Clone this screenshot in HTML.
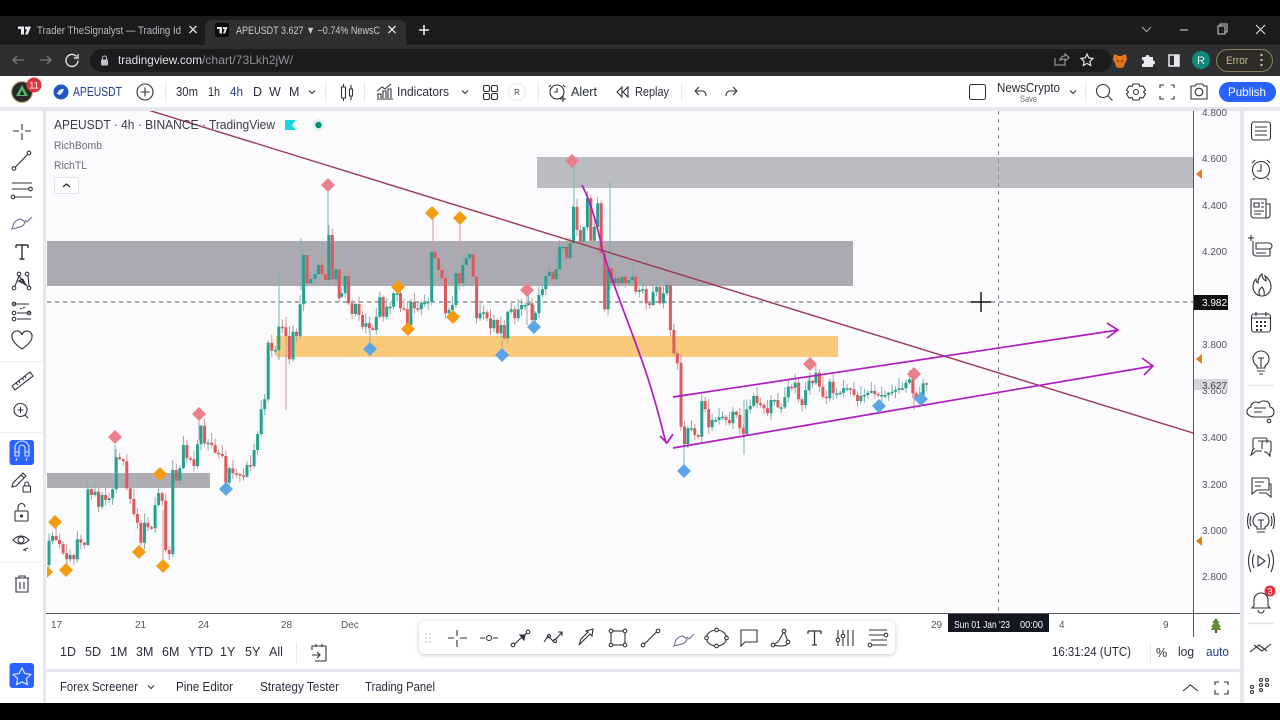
<!DOCTYPE html>
<html><head><meta charset="utf-8"><title>APEUSDT</title>
<style>
html,body{margin:0;padding:0;background:#000;width:1280px;height:720px;overflow:hidden}
svg{display:block;font-family:"Liberation Sans",sans-serif;filter:blur(.3px)}
.t{fill:#2a2e39;font-size:12.5px}
.ax{fill:#50535e;font-size:10px}
.i{fill:none;stroke:#2f323c;stroke-width:1.1}
.c{fill:none;stroke:#dfe1e4;stroke-width:1.3}
</style></head><body>
<svg id="s" xmlns="http://www.w3.org/2000/svg" width="1280" height="720" viewBox="0 0 1280 720">
<defs>
<clipPath id="cp"><rect x="47" y="111" width="1146" height="502"/></clipPath>
<filter id="sh" x="-5%" y="-30%" width="110%" height="170%"><feDropShadow dx="0" dy="1" stdDeviation="2.5" flood-color="#000" flood-opacity=".22"/></filter>
</defs>
<!-- browser chrome -->
<rect width="1280" height="720" fill="#000"/>
<rect y="16" width="1280" height="30" fill="#1b1c1e"/>
<rect y="45" width="1280" height="31" fill="#2e2f31"/>
<path d="M205 46V27q0-7 7-7h187q7 0 7 7v19z" fill="#2e2f31"/>
<rect x="90" y="49" width="1022" height="23" rx="11.500" fill="#1b1c1e"/>
<!-- tab 1 -->
<path d="M18 26.500h6v8h-3v-5.500h-3z" fill="#e8eaed"/><circle cx="26.500" cy="28" r="1.500" fill="#e8eaed"/><path d="M25 34.500l3.200-8H31l-3.200 8z" fill="#e8eaed"/>
<text x="37" y="34" font-size="11" fill="#b9bbbe" textLength="144" lengthAdjust="spacingAndGlyphs">Trader TheSignalyst — Trading Id</text>
<path d="M189.500 26l7 7m0-7l-7 7" class="c"/>
<!-- tab 2 -->
<rect x="215" y="23" width="14" height="14" rx="2" fill="#0a0a0a"/>
<path d="M217 27h5v6.500h-2.500v-4.500H217z" fill="#e8eaed"/><circle cx="224" cy="28.200" r="1.200" fill="#e8eaed"/><path d="M223 33.500l2.500-6.500h2l-2.500 6.500z" fill="#e8eaed"/>
<text x="236" y="34" font-size="11" fill="#c7c9cc" textLength="144" lengthAdjust="spacingAndGlyphs">APEUSDT 3.627 ▼ −0.74% NewsC</text>
<path d="M388.500 26l7 7m0-7l-7 7" class="c"/>
<path d="M424 25v10M419 30h10" stroke="#e8eaed" stroke-width="1.600" fill="none"/>
<path d="M1142 27l4.500 4.500 4.500-4.500" fill="none" stroke="#aaa" stroke-width="1"/>
<path d="M1180 30h8" stroke="#bbb" stroke-width="1.200"/>
<path d="M1218 26h7v8h-7zM1220 26v-2h7v8h-2" fill="none" stroke="#ccc" stroke-width="1"/>
<path d="M1256 25l9 9m0-9l-9 9" stroke="#ddd" stroke-width="1.100"/>
<path d="M24 60H13m4-4l-4 4 4 4" fill="none" stroke="#77797c" stroke-width="1.300"/>
<path d="M40 60h11m-4-4l4 4-4 4" fill="none" stroke="#77797c" stroke-width="1.300"/>
<path d="M76.500 56.500a6 6 0 1 0 1.500 4M78 54v4h-4" fill="none" stroke="#dfe1e4" stroke-width="1.400"/>
<rect x="101" y="59.500" width="7" height="6" rx="1" fill="#bdbfc2"/><path d="M102.500 60v-2a2 2 0 0 1 4 0v2" fill="none" stroke="#bdbfc2"/>
<text x="118" y="64" font-size="12" fill="#dfe1e4" textLength="84" lengthAdjust="spacingAndGlyphs">tradingview.com</text>
<text x="202" y="64" font-size="12" fill="#8d8f92" textLength="91" lengthAdjust="spacingAndGlyphs">/chart/73Lkh2jW/</text>
<path d="M1055 58v7h10v-3M1060 60q1-4 5-4v-2l4 3.500-4 3.500v-2q-3 0-5 1z" fill="none" stroke="#aaa" stroke-width="1"/>
<path d="M1087 54l1.800 3.900 4.200.500-3.100 2.900.8 4.200-3.700-2.100-3.700 2.100.8-4.200-3.100-2.900 4.200-.5z" fill="none" stroke="#dfe1e4" stroke-width="1.200"/>
<path d="M1114 54l5 2h2l5-2 1 6-2 3-1 4-3 1h-2l-3-1-1-4-2-3z" fill="#e2761b"/><path d="M1117 60l2 2M1123 60l-2 2" stroke="#5b3a1e" stroke-width="1.200"/>
<path d="M1142 57h3.500a2 2 0 0 1 4 0h3.500v3.500a2 2 0 0 1 0 4V67h-11v-3a2 2 0 0 0 0-4z" fill="#e8eaed"/>
<rect x="1169" y="55" width="10" height="11" fill="none" stroke="#e8eaed" stroke-width="1.500"/><rect x="1174" y="55" width="5" height="11" fill="#e8eaed"/>
<circle cx="1201" cy="60" r="9" fill="#0f8a78"/><text x="1201" y="64" font-size="11" fill="#e8eaed" text-anchor="middle">R</text>
<rect x="1216.500" y="49.500" width="56" height="22" rx="11" fill="#2e2c26" stroke="#8b7f5e"/>
<text x="1226" y="64" font-size="11" fill="#c8b98f" textLength="22" lengthAdjust="spacingAndGlyphs">Error</text>
<path d="M1261.500 54v2M1261.500 59v2M1261.500 64v2" stroke="#d4c79a" stroke-width="2"/>

<!-- page background -->
<rect y="76" width="1280" height="627" fill="#e6e7ee"/>
<rect y="76" width="1280" height="31" fill="#fff"/>
<rect x="0" y="111" width="43" height="592" fill="#fff"/>
<rect x="1244" y="111" width="36" height="592" fill="#fff"/>
<rect x="46" y="111" width="1194" height="558" fill="#fbfbfe" rx="2"/>
<rect x="46" y="613" width="1194" height="56" fill="#fff"/>
<rect x="46" y="672" width="1194" height="31" fill="#fff" rx="2"/>
<rect x="1193" y="111" width="47" height="502" fill="#fcfcfe"/>

<!-- zones -->
<g clip-path="url(#cp)">
<rect x="47" y="241" width="806" height="45" fill="#abaab2"/>
<rect x="537" y="157" width="656" height="31" fill="#bbbbc2"/>
<rect x="47" y="473" width="163" height="15" fill="#aeadb4"/>
<rect x="276" y="336" width="562" height="21" fill="#f9ca7a"/>
<path d="M47 302H1193" stroke="#55585f" stroke-width="1" stroke-dasharray="4 4"/>
<path d="M998.500 111V613" stroke="#8a8c92" stroke-width="1" stroke-dasharray="4 4"/>
<g id="candles"></g>
<path d="M148 110L1193 433" stroke="#9c3a50" stroke-width="1.400" fill="none"/>
<path d="M582 185C592 205 597 225 602 248C612 285 640 350 650 385C658 410 662 428 666 443M660 436l7 7 6-9" stroke="#b01cc0" stroke-width="1.700" fill="none"/>
<path d="M673 397L1118 330M1107 323l11 7-11 8" stroke="#b01cc0" stroke-width="1.700" fill="none"/>
<path d="M673 448L1153 366M1142 358l11 8-9 9" stroke="#b01cc0" stroke-width="1.700" fill="none"/>
<g fill="#e9808a">
<path d="M572 154l7 7-7 7-7-7z"/><path d="M328 178l7 7-7 7-7-7z"/><path d="M199 407l7 7-7 7-7-7z"/><path d="M115 430l7 7-7 7-7-7z"/><path d="M527 283l7 7-7 7-7-7z"/><path d="M810 357l7 7-7 7-7-7z"/><path d="M914 367l7 7-7 7-7-7z"/>
</g>
<g fill="#f39c12">
<path d="M432 206l7 7-7 7-7-7z"/><path d="M460 211l7 7-7 7-7-7z"/><path d="M398 280l7 7-7 7-7-7z"/><path d="M408 322l7 7-7 7-7-7z"/><path d="M453 310l7 7-7 7-7-7z"/><path d="M160 467l7 7-7 7-7-7z"/><path d="M139 545l7 7-7 7-7-7z"/><path d="M55 515l7 7-7 7-7-7z"/><path d="M66 563l7 7-7 7-7-7z"/><path d="M163 559l7 7-7 7-7-7z"/><path d="M46 565l7 7-7 7-7-7z"/>
</g>
<g fill="#5aa5e6">
<path d="M370 342l7 7-7 7-7-7z"/><path d="M502 348l7 7-7 7-7-7z"/><path d="M534 320l7 7-7 7-7-7z"/><path d="M226 482l7 7-7 7-7-7z"/><path d="M684 464l7 7-7 7-7-7z"/><path d="M879 399l7 7-7 7-7-7z"/><path d="M921 392l7 7-7 7-7-7z"/>
</g>
<path d="M981 292v20M971 302h20" stroke="#111" stroke-width="1.400"/>
</g>

<!-- axes -->
<path d="M46 613.500H1240" stroke="#55585f"/>
<path d="M1193.500 111V637" stroke="#55585f"/>
<g class="ax">
<text x="1202" y="116">4.800</text><text x="1202" y="162">4.600</text><text x="1202" y="209">4.400</text><text x="1202" y="255">4.200</text><text x="1202" y="348">3.800</text><text x="1202" y="394">3.600</text><text x="1202" y="441">3.400</text><text x="1202" y="488">3.200</text><text x="1202" y="534">3.000</text><text x="1202" y="580">2.800</text>
</g>
<rect x="1194" y="295" width="34" height="15" fill="#111"/><text x="1202" y="306" font-size="10" fill="#fff">3.982</text>
<rect x="1194" y="379" width="34" height="11" fill="#d5d6dc"/><text x="1202" y="389" font-size="10" fill="#444">3.627</text>
<g fill="#e67e10"><path d="M1202 169v10l-6-5z"/><path d="M1202 354v10l-6-5z"/><path d="M1202 536v10l-6-5z"/></g>
<g class="ax"><text x="51" y="628">17</text><text x="135" y="628">21</text><text x="198" y="628">24</text><text x="281" y="628">28</text><text x="341" y="628">Dec</text><text x="931" y="628">29</text><text x="1059" y="628">4</text><text x="1163" y="628">9</text></g>
<rect x="948" y="614" width="101" height="18" fill="#131722"/>
<text x="954" y="628" font-size="10" fill="#fff" textLength="56" lengthAdjust="spacingAndGlyphs">Sun 01 Jan '23</text>
<text x="1020" y="628" font-size="10" fill="#fff" textLength="23" lengthAdjust="spacingAndGlyphs">00:00</text>
<path d="M1216 618l3.500 5h-1.500l3 4h-2l2.500 3h-11l2.500-3h-2l3-4H1212z" fill="#5d8a35"/><rect x="1215" y="630" width="2" height="3" fill="#6b4a2a"/>

<!-- legend -->
<text x="54" y="129" font-size="12.500" fill="#3a3d47" textLength="221" lengthAdjust="spacingAndGlyphs">APEUSDT · 4h · BINANCE · TradingView</text>
<path d="M285 120h11l-4 5 4 5h-11z" fill="#19d6e6"/>
<circle cx="318.500" cy="125" r="6" fill="#dff1ee"/><circle cx="318.500" cy="125" r="3.200" fill="#0e8f7c"/>
<text x="54" y="149" font-size="11" fill="#6a6d78" textLength="48" lengthAdjust="spacingAndGlyphs">RichBomb</text>
<text x="54" y="169" font-size="11" fill="#6a6d78" textLength="33" lengthAdjust="spacingAndGlyphs">RichTL</text>
<rect x="54.500" y="177.500" width="24" height="16" rx="2" fill="#fff" stroke="#e0e3eb"/><path d="M63 187l3.500-3 3.500 3" fill="none" stroke="#222" stroke-width="1.200"/>

<!-- top toolbar -->
<circle cx="22" cy="92" r="10.500" fill="#2a2a2a" stroke="#c9b68d" stroke-width="1.200"/><path d="M22 85l6 11H16z" fill="#58b868"/><path d="M22 90l2.500 5h-5z" fill="#222"/>
<circle cx="34" cy="85" r="7.500" fill="#e0323c"/><text x="34" y="88.500" font-size="9.500" fill="#fff" text-anchor="middle">11</text>
<circle cx="61" cy="92" r="7.500" fill="#1f55c4"/><path d="M57 94q2-6 7-5-1 2-1 3l-3 3z" fill="#dfe8ff"/>
<text x="73" y="96" font-size="12.500" fill="#24408f" textLength="49" lengthAdjust="spacingAndGlyphs">APEUSDT</text>
<circle cx="145" cy="92" r="8" class="i"/><path d="M145 87.500v9M140.500 92h9" class="i"/>
<path d="M165.500 82v20M325.500 82v20M364.500 82v20M538.500 82v20M681.500 82v20M1085.500 82v20" stroke="#e8e9ee"/>
<g class="t"><text x="176" y="96" textLength="22" lengthAdjust="spacingAndGlyphs">30m</text><text x="208" y="96" textLength="12" lengthAdjust="spacingAndGlyphs">1h</text><text x="230" y="96" style="fill:#24408f" textLength="13" lengthAdjust="spacingAndGlyphs">4h</text><text x="253" y="96">D</text><text x="269" y="96">W</text><text x="289" y="96">M</text></g>
<path d="M309 90.500l3 3 3-3M462 90.500l3 3 3-3M1070 90.500l3 3 3-3" class="i"/>
<path d="M341.500 87h4v11h-4zM343.500 84v3M343.500 98v3M349.500 89h3v7h-3zM351 85v4M351 96v4" class="i"/>
<path d="M377 99h16M378 98v-4h3v4M383 98v-7h3v7M388 98v-9h3v9M377 91l5-4 3 2 6-5" class="i"/>
<text x="397" y="96" class="t" textLength="52" lengthAdjust="spacingAndGlyphs">Indicators</text>
<rect x="483.500" y="85.500" width="6" height="6" rx="1.500" class="i"/><rect x="491.500" y="85.500" width="6" height="6" rx="1.500" class="i"/><rect x="483.500" y="93.500" width="6" height="6" rx="1.500" class="i"/><rect x="491.500" y="93.500" width="6" height="6" rx="1.500" class="i"/>
<circle cx="517" cy="92" r="8.500" fill="#fff" stroke="#e8e9ee"/><text x="517" y="95" font-size="8" fill="#444" text-anchor="middle">R</text>
<circle cx="557" cy="92" r="7" class="i"/><path d="M557 88v4h-3M551 85l-2 2M563 85l2 2M560 99h6M563 96v6" class="i"/>
<text x="571" y="96" class="t" textLength="26" lengthAdjust="spacingAndGlyphs">Alert</text>
<path d="M622 87l-5 5 5 5zM628 87l-5 5 5 5z" class="i"/>
<text x="635" y="96" class="t" textLength="34" lengthAdjust="spacingAndGlyphs">Replay</text>
<path d="M695 91l4-4M695 91l4 4M695 91h8q3 1 3 5" class="i"/>
<path d="M737 91l-4-4M737 91l-4 4M737 91h-8q-3 1-3 5" class="i"/>
<rect x="969.500" y="84.500" width="16" height="15" rx="2" class="i"/>
<text x="997" y="92" class="t" textLength="63" lengthAdjust="spacingAndGlyphs">NewsCrypto</text>
<text x="1020" y="102" font-size="9" fill="#6a6d78" textLength="17" lengthAdjust="spacingAndGlyphs">Save</text>
<circle cx="1103" cy="91" r="6.500" class="i"/><path d="M1108 96l4.500 4.500" class="i"/>
<circle cx="1136" cy="92" r="2.500" class="i"/><path d="M1133 84h6l1 2.500 3-.5 2.500 4-2 2 2 2-2.500 4-3-.5-1 2.500h-6l-1-2.500-3 .5-2.500-4 2-2-2-2 2.500-4 3 .5z" class="i"/>
<path d="M1160 88v-3h4M1171 85h3v3M1174 96v3h-3M1164 99h-4v-3" class="i"/>
<path d="M1191 86h4l1.500-2h6l1.500 2h3v13h-16z" class="i"/><circle cx="1199" cy="92" r="3.800" class="i"/>
<rect x="1219" y="82" width="57" height="20" rx="10" fill="#2962ff"/>
<text x="1228" y="96" font-size="12" fill="#fff" textLength="38" lengthAdjust="spacingAndGlyphs">Publish</text>

<!-- left toolbar -->
<g class="i">
<path d="M22 124v6M22 133v7M13 131h6M25 131h6"/>
<circle cx="14" cy="168.500" r="1.800"/><circle cx="29" cy="153" r="1.800"/><path d="M15.500 167l12-12.500"/>
<path d="M12 183h20M12 189h17M15 197h17"/><circle cx="30.500" cy="189" r="1.800"/><circle cx="13" cy="197" r="1.800"/>
<path d="M12 229l2-6q3-4 7-4l4 3q-1 4-5 5z" stroke="#6a7090"/><path d="M25 220l2 2 5-5" stroke="#6a7090"/>
<path d="M16 245h12M16 245v3M28 245v3M22 245v14M19.500 259h5" stroke-width="1.400"/>
<circle cx="14" cy="288" r="1.800"/><circle cx="29" cy="288" r="1.800"/><circle cx="19" cy="274" r="1.800"/><circle cx="27" cy="274" r="1.800"/><circle cx="22" cy="281" r="1.800"/><path d="M15 286l4-10 8 10-8-6M28 276l1 10M17 281l8 1"/>
<path d="M13 304h16M17 313h14M17 319h14"/><circle cx="14" cy="304" r="1.800"/><circle cx="14" cy="313" r="1.800"/><circle cx="14" cy="319" r="1.800"/><circle cx="29" cy="313" r="1.800"/><path d="M20 309l6-2" stroke-dasharray="2 1"/>
<path d="M22 349q-10-7-10-12a5 5 0 0 1 10-2 5 5 0 0 1 10 2q0 5-10 12z"/>
<path d="M12 386l18-14 3 4-18 14zM16 383l2 2M19 381l1 2M22 378l2 2M25 376l1 2"/>
<circle cx="20.500" cy="410" r="6.500"/><path d="M20.500 407v6M17.500 410h6M25 415l3 3"/>
<path d="M13 483l10-10 3 3-10 10-4 1zM21 475l3 3"/><rect x="23" y="486" width="7.500" height="6" rx="1"/><path d="M24.800 486v-2a2 2 0 0 1 4 0v2"/>
<rect x="15" y="511" width="13" height="10" rx="1"/><path d="M18 511v-4a3.500 3.500 0 0 1 7 0"/><circle cx="21.500" cy="516" r="1" fill="#2f323c"/>
<path d="M13 540q8-8 16 0-8 8-16 0z"/><circle cx="21" cy="540" r="3"/><path d="M23 550l5-2M24 549l2 2"/>
<path d="M15 578h14M19 578v-2h6v2M16 578v14h12v-14M20 582v7M24 582v7"/>
</g>
<path d="M0 361.500h43M0 432.500h43M0 562.500h43" stroke="#eceef2"/>
<rect x="9.500" y="440" width="24.500" height="25" rx="3" fill="#2962ff"/>
<path d="M15 456v-8a7 7 0 0 1 14 0v8h-4v-8a3 3 0 0 0-6 0v8zM15 452h4M25 452h4M17 458l-1 3M27 458l-1 3" fill="none" stroke="#dfe8ff" stroke-width="1.100"/>
<rect x="9.500" y="663" width="24.500" height="25" rx="3" fill="#2962ff"/>
<path d="M22 668l2.800 5.500 6 .9-4.400 4.200 1 6-5.400-2.800-5.400 2.800 1-6-4.400-4.200 6-.9z" fill="none" stroke="#dfe8ff" stroke-width="1.200"/>

<!-- right toolbar -->
<g class="i">
<rect x="1251.500" y="122" width="19" height="18" rx="2.500"/><path d="M1255 127h12M1255 131h12M1255 135h12"/>
<circle cx="1261" cy="170" r="8.500"/><path d="M1261 164v7h-4M1252 163l3-3M1270 163l-3-3M1255 178l-2 2M1267 178l2 2"/>
<path d="M1251 199h15v19h-12a3 3 0 0 1-3-3zM1266 204h4v11a3 3 0 0 1-3 3h-1M1254 203h5v4h-5zM1261 203h3M1261 207h3M1254 211h10M1254 214h7"/>
<path d="M1253 241v12a3 3 0 0 0 3 3h13a1 1 0 0 0 1-1v-7M1256 243h13a1.500 1.500 0 0 1 0 6h-13zM1256 253h10M1248 238h6M1251 235v6"/>
<path d="M1262 274q0 5 4 7 0-3-1-5 6 4 6 11a9 9 0 0 1-18 0q0-5 3-8 0 3 2 4 0-6 4-9zM1260 295q-3-4 2-8 3 4 2 8"/>
<rect x="1251.500" y="314" width="19" height="18" rx="2.500"/><path d="M1256 312v4M1266 312v4M1251.500 318h19"/>
<path d="M1256 322h2M1260 322h2M1264 322h2M1256 326h2M1260 326h2M1264 326h2M1256 330h2M1260 330h2" stroke-width="2"/>
<path d="M1257 368v-2q-4-3-4-7a8 8 0 0 1 16 0q0 4-4 7v2zM1257 371h8M1259 374h4M1258 358h6M1261 358v9"/>
<path d="M1254 417h14q6 0 6-5 0-4-4-5 0-6-6-6-4 0-5 2-3-2-6 0t-2 4q-4 1-4 5t7 5zM1254 408h12M1254 412h8"/><circle cx="1269" cy="421" r="1.800"/>
<path d="M1267 443v-3q0-2-2-2h-10q-2 0-2 2v7q0 2 2 2h0M1262 449v-6q0-2 2-2h5q2 0 2 2v7q0 2-1 2v4l-4-4h-2M1253 449l-2 6 5-4h6M1258 441h5"/>
<path d="M1252 478h15q2 0 2 2v10h-12l-5 4zM1255 482h9M1255 486h6M1269 484h2v13l-5-4h-7"/>
<path d="M1257 529v-2q-4-2-4-6a8 8 0 0 1 16 0q0 4-4 6v2zM1257 532h8M1258 520h6M1261 520v8M1251 516q-2 5 0 10M1249 513q-3 8 0 16M1271 516q2 5 0 10M1273 513q3 8 0 16"/>
<path d="M1258 556l7 5-7 5zM1254 554q-3 7 0 14M1268 554q3 7 0 14M1251 550q-5 11 0 22M1271 550q5 11 0 22"/>
<path d="M1254 606v-6a7 7 0 0 1 14 0v6l2 2h-18zM1258 610a3 3 0 0 0 6 0"/>
<path d="M1250 652l9-7 8 6M1254 645l8 6 9-7"/>
<circle cx="1252" cy="687" r="1.500"/><circle cx="1252" cy="692" r="1.500"/><circle cx="1261" cy="680" r="1.500"/><circle cx="1261" cy="685" r="1.500"/><circle cx="1261" cy="690" r="1.500"/><circle cx="1267" cy="680" r="1.500"/><circle cx="1267" cy="685" r="1.500"/>
</g>
<circle cx="1270" cy="591" r="5.500" fill="#e0323c"/><text x="1270" y="594.500" font-size="9" fill="#fff" text-anchor="middle">3</text>
<path d="M1248 385.500h26M1248 623.500h26" stroke="#e6e7ee" stroke-width="1.500"/>

<!-- bottom range bar -->
<g class="t" font-size="12">
<text x="60" y="656">1D</text><text x="85" y="656">5D</text><text x="110" y="656">1M</text><text x="136" y="656">3M</text><text x="162" y="656">6M</text><text x="188" y="656">YTD</text><text x="220" y="656">1Y</text><text x="245" y="656">5Y</text><text x="269" y="656">All</text>
</g>
<path d="M296.500 642v22M1150.500 642v22" stroke="#e8e9ee"/>
<path d="M312 650v-4h13q1 0 1 1v13q0 1-1 1h-10M312 655h8m-3-3l3 3-3 3M316 644v3M322 644v3" class="i"/>
<text x="1052" y="656" class="t" textLength="79" lengthAdjust="spacingAndGlyphs">16:31:24 (UTC)</text>
<text x="1156" y="657" class="t">%</text>
<text x="1178" y="656" class="t" textLength="16" lengthAdjust="spacingAndGlyphs">log</text>
<text x="1206" y="656" class="t" style="fill:#24408f" textLength="23" lengthAdjust="spacingAndGlyphs">auto</text>

<!-- drawing toolbar -->
<rect x="419" y="621" width="476" height="33" rx="6" fill="#fff" filter="url(#sh)"/>
<g fill="#cfd1d6"><circle cx="426" cy="634" r="1"/><circle cx="430" cy="634" r="1"/><circle cx="426" cy="638" r="1"/><circle cx="430" cy="638" r="1"/><circle cx="426" cy="642" r="1"/><circle cx="430" cy="642" r="1"/></g>
<g class="i">
<path d="M457 630v6M457 640v7M448 638h6M460 638h7"/>
<path d="M480 638h5M493 638h5"/><circle cx="489" cy="638" r="2.500"/>
<circle cx="513" cy="645" r="1.800"/><circle cx="528" cy="632" r="1.800"/><path d="M514.500 644l12-11"/><path d="M520 635l5 0-1 5z" fill="#2f323c"/>
<path d="M544 642l4-6 5 5 4-3 5-6M558 632h4v4"/><circle cx="549" cy="636" r="1.600"/><circle cx="555" cy="641" r="1.600"/>
<path d="M579 645l2-6 7-7-2-1 7-2-1 7-2-2-7 7z"/>
<rect x="611" y="631" width="14" height="14"/><circle cx="611" cy="631" r="1.800" fill="#fff"/><circle cx="625" cy="631" r="1.800" fill="#fff"/><circle cx="611" cy="645" r="1.800" fill="#fff"/><circle cx="625" cy="645" r="1.800" fill="#fff"/>
<circle cx="643" cy="645" r="1.800"/><circle cx="658" cy="631" r="1.800"/><path d="M644.500 644l12-12"/>
<path d="M674 646l2-6q3-4 7-4l4 3q-1 4-5 5z" stroke="#6a7090"/><path d="M687 637l2 2 5-5" stroke="#6a7090"/>
<ellipse cx="716.500" cy="638" rx="10" ry="8"/><circle cx="716.500" cy="630" r="1.800" fill="#fff"/><circle cx="716.500" cy="646" r="1.800" fill="#fff"/><circle cx="706.500" cy="638" r="1.800" fill="#fff"/><circle cx="726.500" cy="638" r="1.800" fill="#fff"/>
<path d="M741 630h16v12h-12l-4 4z"/>
<path d="M773 645q5-2 8-8l3-6 4 11q0 4-7 4-5 0-8-1z"/><circle cx="773" cy="645" r="1.800" fill="#fff"/><circle cx="784" cy="631" r="1.800" fill="#fff"/><circle cx="788" cy="642" r="1.800" fill="#fff"/>
<path d="M808 631h13M808 631v3M821 631v3M814.500 631v14M812 645h5" stroke-width="1.300"/>
<path d="M838 630v16M843 630v16M848 630v16M853 630v16"/><circle cx="838" cy="640" r="1.800" fill="#fff"/><circle cx="843" cy="636" r="1.800" fill="#fff"/>
<path d="M869 630h18M869 635h15M872 645h15M871 640h16"/><circle cx="886" cy="635" r="1.800" fill="#fff"/><circle cx="870" cy="645" r="1.800" fill="#fff"/>
</g>

<!-- bottom panel -->
<g class="t" font-size="12">
<text x="60" y="691" textLength="78" lengthAdjust="spacingAndGlyphs">Forex Screener</text>
<text x="176" y="691" textLength="57" lengthAdjust="spacingAndGlyphs">Pine Editor</text>
<text x="260" y="691" textLength="79" lengthAdjust="spacingAndGlyphs">Strategy Tester</text>
<text x="365" y="691" textLength="70" lengthAdjust="spacingAndGlyphs">Trading Panel</text>
</g>
<path d="M148 685.500l3 3 3-3" class="i"/>
<path d="M1183 691l7.500-6 7.500 6" class="i"/>
<path d="M1215 685v-3h4M1224 682h4v3M1228 690v4h-4M1219 694h-4v-4" class="i"/>
<rect y="703" width="1280" height="17" fill="#000"/>
</svg>
<script>
(function(){
var segs=[
[49,3.536,200,1095,[1022,1008,1020,1032,1060,1078,1065,1078,1018,1028,1035,868,885,875,920,885,900,895,868,772,778,784,865,897,942,968,1028,968,982,985,915,880,902,1050,1062,810,842,805,735,775,778,798,733,677,730,728,735,758,762,768,848,805,820,822,826,830,795,798,750,702,628,598,428,452,450,380,382,408,478,395,408,313,165,250,237]],
[315,3.46,200,237,[222,195,222,240,105,238,208,295]],
[341.7,3.46,150,440,[430,378,460,492,462,495,530,520,535,540,500,442,500,470,470,430,430,475,478,525,455,475,478,458,458,455,305,325,360,385,490,480,465,370,400,345,325,313,380,505,490,487,505,535,510,550,525,565,485,478,505,478,465,465,460,510,490,435,418,378,365,388,358,290,290,325,280,170,240,275,232,145,272,230,160,310,478,355,400,385,400,380,400,390,380,425,420,418,460,465,425,410,460,430,405,540,610,640]],
[681,3.46,320,128,[320,372,325,325,345,350,243,268,322,300,300,292,290,300,310,275,285,325,342,268,258,228,250,255,265,280,240,240,262,262,232,200,203,188,238,255,210,182,190,158,200,230,235,185,220,220,218,205,205,208,225,243,228,225,218,213,222,225,225,225,218,215,210,205,205,188,178,220,235,225,190,192]]
];
var g='',r='',wg='',wr='',n=0;
function f(v){return v.toFixed(1)}
segs.forEach(function(s){
  var o=s[2]+s[3]/3;
  s[4].forEach(function(z,i){
    var c=s[2]+z/3,x=s[0]+s[1]*i,up=c<=o,t=Math.min(o,c),b=Math.max(o,c);
    if(b-t<1.5){b=t+1.5}
    n++;
    var u=1+((n*7)%11)*0.9,d=1+((n*5+3)%9)*0.7;
    var seg='M'+f(x)+' '+f(t)+'V'+f(b);
    var w='M'+f(x)+' '+f(t-u)+'V'+f(b+d);
    if(up){g+=seg;wg+=w}else{r+=seg;wr+=w}
    o=c;
  });
});
var extraG=[[328,192,252],[610,182,290],[574,165,205],[279,270,360],[301,238,290],[744,400,455],[684,425,465],[534,305,320],[115,445,470],[226,470,482],[370,330,345]];
var extraR=[[433,212,250],[460,222,255],[286,317,410],[502,340,362],[527,295,325],[163,510,560],[199,420,440],[810,372,395],[914,380,410],[408,310,325]];
extraG.forEach(function(e){wg+='M'+e[0]+' '+e[1]+'V'+e[2]});
extraR.forEach(function(e){wr+='M'+e[0]+' '+e[1]+'V'+e[2]});
var h='<path d="'+wg+'" stroke="#7fb0ab" stroke-width="1" fill="none"/>'+
'<path d="'+wr+'" stroke="#c79a9c" stroke-width="1" fill="none"/>'+
'<path d="'+r+'" stroke="#dc5a5c" stroke-width="3" fill="none"/>'+
'<path d="'+g+'" stroke="#26a18f" stroke-width="3" fill="none"/>';
document.getElementById('candles').innerHTML=h;
})();
</script>
</body></html>
